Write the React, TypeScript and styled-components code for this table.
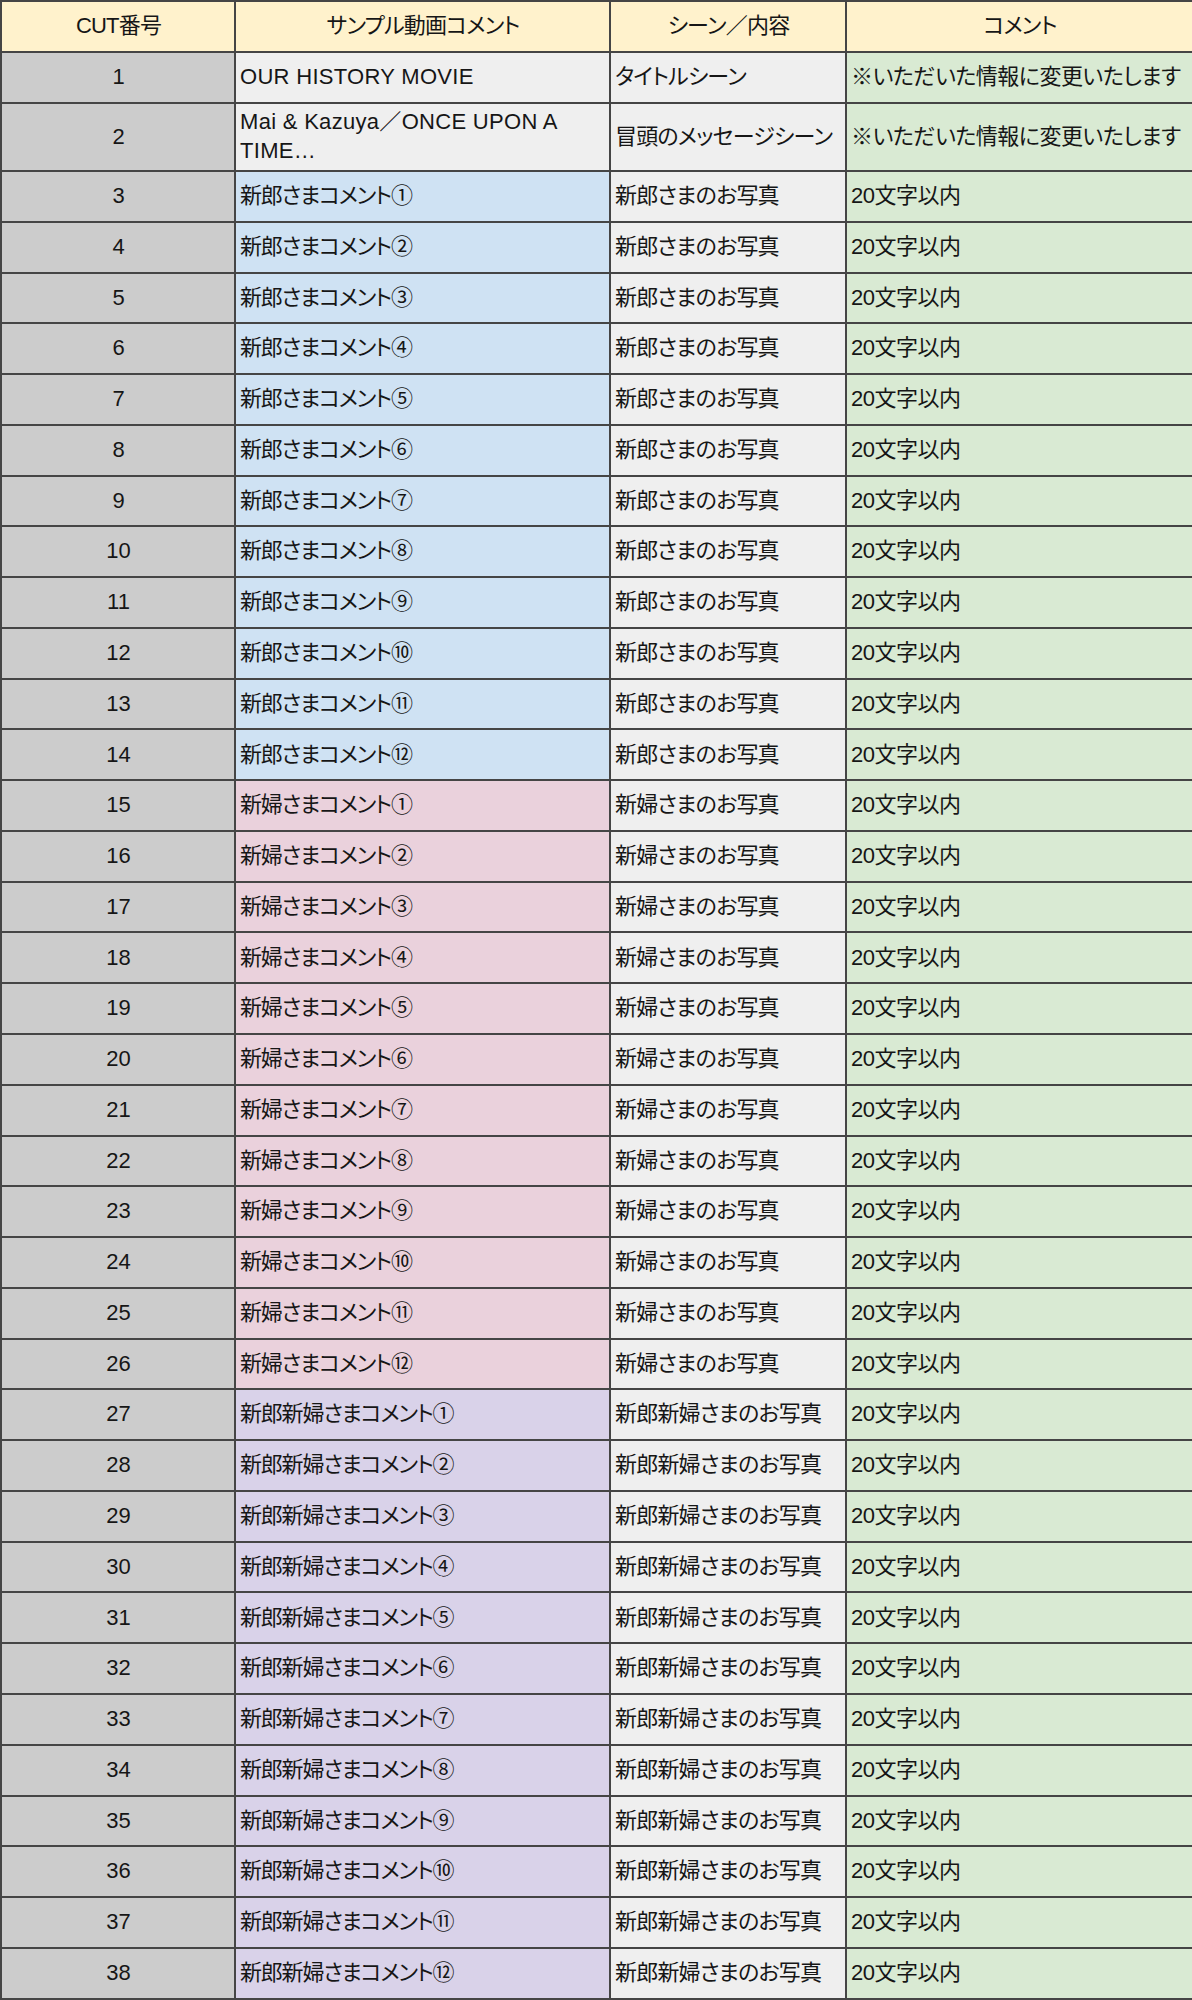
import React from "react";
import styled, { createGlobalStyle } from "styled-components";

const GlobalStyle = createGlobalStyle`
  html, body {
    margin: 0;
    padding: 0;
    background: #ffffff;
  }
  body {
    font-family: "Liberation Sans", "Noto Sans CJK JP", sans-serif;
    font-feature-settings: "palt";
    color: #161616;
  }
`;

const LINE = "#454545";

const Sheet = styled.div`
  display: grid;
  grid-template-columns: 234px 375px 236px 1fr;
  grid-template-rows: 51px 51px 68px repeat(36, 50.78px);
  width: 1192px;
  box-sizing: border-box;
  border-top: 2px solid ${LINE};
  border-left: 2px solid ${LINE};
  overflow: hidden;
`;

const Cell = styled.div<{
  $bg: string;
  $center?: boolean;
  $last?: boolean;
  $spacing?: string;
  $nowrap?: boolean;
}>`
  box-sizing: border-box;
  display: flex;
  align-items: center;
  justify-content: ${(p) => (p.$center ? "center" : "flex-start")};
  padding: 0 3px 0 4px;
  background: ${(p) => p.$bg};
  border-right: ${(p) => (p.$last ? "none" : `2px solid ${LINE}`)};
  border-bottom: 2px solid ${LINE};
  font-size: 22px;
  line-height: 1.3;
  letter-spacing: ${(p) => p.$spacing ?? "0"};
  white-space: ${(p) => (p.$nowrap ? "nowrap" : "normal")};
  overflow: hidden;
`;

const HeaderCell = styled(Cell).attrs({ $center: true, $spacing: "-0.8px" })``;

const COLORS = {
  header: "#fff2cc",
  num: "#cccccc",
  gray: "#efefef",
  blue: "#cfe2f3",
  pink: "#ead1dc",
  purple: "#d9d2e9",
  green: "#d9ead3",
};

const circled = ["①", "②", "③", "④", "⑤", "⑥", "⑦", "⑧", "⑨", "⑩", "⑪", "⑫"];

type Row = {
  no: number;
  title: string;
  titleBg: string;
  latin: boolean;
  scene: string;
  note: string;
};

const rows: Row[] = [
  {
    no: 1,
    title: "OUR HISTORY MOVIE",
    titleBg: COLORS.gray,
    latin: true,
    scene: "タイトルシーン",
    note: "※いただいた情報に変更いたします",
  },
  {
    no: 2,
    title: "Mai & Kazuya／ONCE UPON A TIME…",
    titleBg: COLORS.gray,
    latin: true,
    scene: "冒頭のメッセージシーン",
    note: "※いただいた情報に変更いたします",
  },
];

const groups = [
  { who: "新郎", bg: COLORS.blue },
  { who: "新婦", bg: COLORS.pink },
  { who: "新郎新婦", bg: COLORS.purple },
];

let n = 3;
groups.forEach((g) => {
  circled.forEach((c) => {
    rows.push({
      no: n++,
      title: `${g.who}さまコメント${c}`,
      titleBg: g.bg,
      latin: false,
      scene: `${g.who}さまのお写真`,
      note: "20文字以内",
    });
  });
});

export default function App() {
  return (
    <>
      <GlobalStyle />
      <Sheet>
        <HeaderCell $bg={COLORS.header}>CUT番号</HeaderCell>
        <HeaderCell $bg={COLORS.header}>サンプル動画コメント</HeaderCell>
        <HeaderCell $bg={COLORS.header}>シーン／内容</HeaderCell>
        <HeaderCell $bg={COLORS.header} $last>
          コメント
        </HeaderCell>
        {rows.map((r) => (
          <React.Fragment key={r.no}>
            <Cell $bg={COLORS.num} $center>
              {r.no}
            </Cell>
            <Cell $bg={r.titleBg} $spacing={r.latin ? "0.3px" : "-1.2px"}>
              {r.title}
            </Cell>
            <Cell $bg={COLORS.gray} $spacing="-0.8px" $nowrap>
              {r.scene}
            </Cell>
            <Cell $bg={COLORS.green} $spacing="-0.5px" $nowrap $last>
              {r.note}
            </Cell>
          </React.Fragment>
        ))}
      </Sheet>
    </>
  );
}
